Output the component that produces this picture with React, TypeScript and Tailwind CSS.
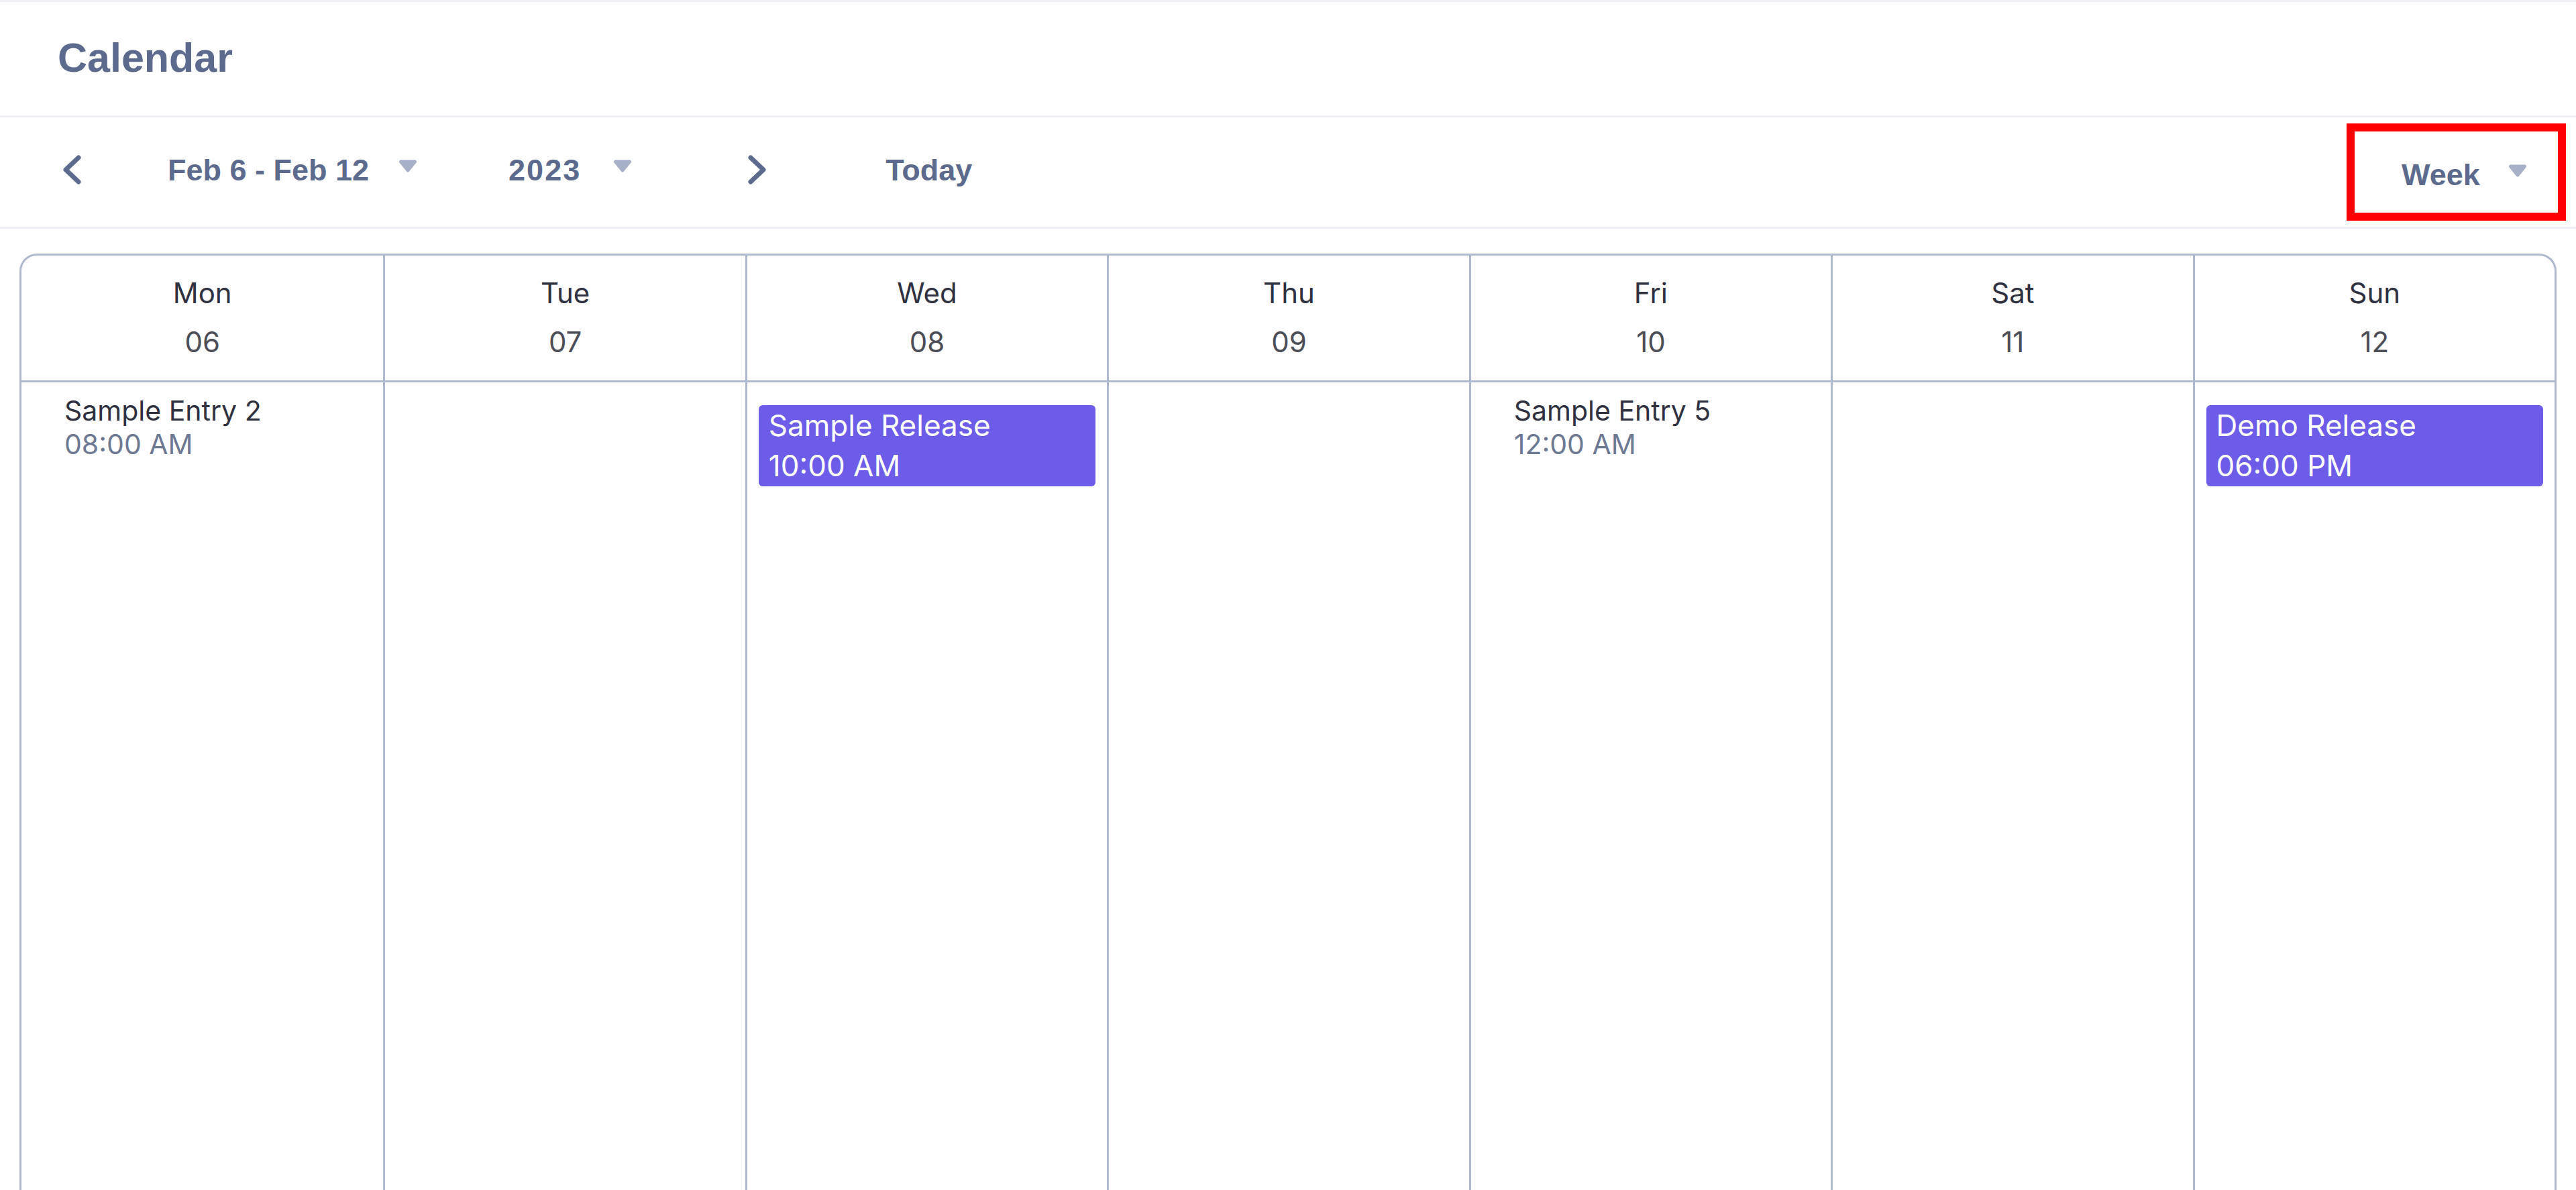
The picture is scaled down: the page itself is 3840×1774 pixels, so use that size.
import { Fragment } from 'react'

type Entry = { title: string; time: string; highlight?: boolean }
type Day = { name: string; date: string; entries: Entry[] }

const days: Day[] = [
  { name: 'Mon', date: '06', entries: [{ title: 'Sample Entry 2', time: '08:00 AM' }] },
  { name: 'Tue', date: '07', entries: [] },
  { name: 'Wed', date: '08', entries: [{ title: 'Sample Release', time: '10:00 AM', highlight: true }] },
  { name: 'Thu', date: '09', entries: [] },
  { name: 'Fri', date: '10', entries: [{ title: 'Sample Entry 5', time: '12:00 AM' }] },
  { name: 'Sat', date: '11', entries: [] },
  { name: 'Sun', date: '12', entries: [{ title: 'Demo Release', time: '06:00 PM', highlight: true }] },
]

function Chevron({ dir }: { dir: 'left' | 'right' }) {
  return (
    <svg className="block" width="30" height="46" viewBox="0 0 30 46" fill="none" stroke="#5b6a8d" strokeWidth="7" strokeLinecap="round" strokeLinejoin="round">
      {dir === 'left' ? <polyline points="25,5 6,23 25,41" /> : <polyline points="5,5 24,23 5,41" />}
    </svg>
  )
}

function Caret({ className }: { className?: string }) {
  return (
    <svg className={className} width="28" height="21" viewBox="0 0 28 21">
      <path d="M3.5 1.5 H24.5 a2.5 2.5 0 0 1 2 4 L16 18.6 a2.5 2.5 0 0 1 -4 0 L1.5 5.5 A2.5 2.5 0 0 1 3.5 1.5Z" fill="#a6b0c7" />
    </svg>
  )
}

export default function App() {
  return (
    <div className="h-screen overflow-hidden bg-white flex flex-col font-['Inter','Noto_Sans',sans-serif]">
      {/* page title */}
      <div className="border-t-[3px] border-b-[3px] border-[#eef0f5] h-[175px] pl-[86px] pt-[47px]">
        <h1 className="font-['Liberation_Sans',Arial,sans-serif] text-[61px] leading-[72px] font-bold text-[#5b6a8d]">Calendar</h1>
      </div>

      {/* toolbar */}
      <div className="h-[166px] border-b-[3px] border-[#eef0f5] flex items-center pl-[92px] pr-[15px] font-['Liberation_Sans',Arial,sans-serif] text-[45px] leading-[52px] font-bold text-[#5b6a8d]">
        <div className="-mt-[8px]"><Chevron dir="left" /></div>
        <span className="ml-[128px] -mt-[6px]">Feb 6 - Feb 12</span>
        <Caret className="block ml-[44px] -mt-[18px]" />
        <span className="ml-[136px] -mt-[6px] tracking-[2px]">2023</span>
        <Caret className="block ml-[48px] -mt-[18px]" />
        <div className="ml-[172px] -mt-[8px]"><Chevron dir="right" /></div>
        <span className="ml-[176px] -mt-[6px]">Today</span>

        <div className="ml-auto w-[327px] h-[145px] border-[12px] border-[#ff0000] flex items-center pl-[70px]">
          <span className="mt-[8px]">Week</span>
          <Caret className="block ml-[42px] -mt-[4px]" />
        </div>
      </div>

      {/* week grid */}
      <div className="flex-1 mx-[29px] mt-[37px] border-[3px] border-b-0 border-[#aeb8ce] rounded-t-[26px] grid grid-cols-7">
        {days.map((d, i) => (
          <div key={d.name} className={i === 0 ? 'flex flex-col' : 'flex flex-col border-l-[3px] border-[#aeb8ce]'}>
            <div className="h-[189px] border-b-[3px] border-[#aeb8ce] flex flex-col items-center pt-[31px] gap-[23px] text-[42px] leading-[50px]">
              <span className="text-[#2f3140]">{d.name}</span>
              <span className="text-[#4b4d57]">{d.date}</span>
            </div>
            <div className="flex-1">
              {d.entries.map((e) => (
                <Fragment key={e.title}>
                  {e.highlight ? (
                    <div className="mt-[34px] mx-[17px] h-[121px] rounded-[6px] bg-[#6c5ce7] px-[15px] text-white text-[44px] leading-[60px]">
                      <div>{e.title}</div>
                      <div>{e.time}</div>
                    </div>
                  ) : (
                    <div className="pt-[17px] pl-[64px] text-[41px] leading-[50px]">
                      <div className="text-[#2f3140]">{e.title}</div>
                      <div className="text-[#6d7893]">{e.time}</div>
                    </div>
                  )}
                </Fragment>
              ))}
            </div>
          </div>
        ))}
      </div>
    </div>
  )
}
